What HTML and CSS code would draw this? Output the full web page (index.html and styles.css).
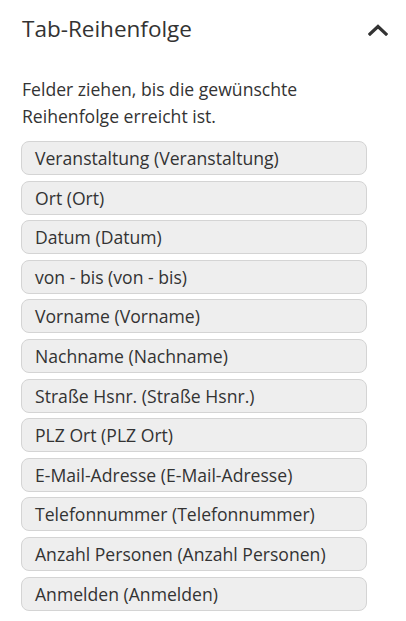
FILE: index.html
```html
<!DOCTYPE html>
<html lang="de">
<head>
<meta charset="utf-8">
<title>Tab-Reihenfolge</title>
<link rel="stylesheet" href="styles.css">
</head>
<body>
<section class="panel">
  <header class="panel-header">
    <h2 class="panel-title">Tab-Reihenfolge</h2>
    <svg class="chevron" width="20" height="12" viewBox="0 0 20 12" aria-hidden="true">
      <path d="M2 10 L10 2.5 L18 10" fill="none" stroke="#333" stroke-width="3.2" stroke-linecap="square" stroke-linejoin="miter"/>
    </svg>
  </header>
  <p class="hint">Felder ziehen, bis die gewünschte Reihenfolge erreicht ist.</p>
  <ul class="order-list">
    <li class="order-item">Veranstaltung (Veranstaltung)</li>
    <li class="order-item">Ort (Ort)</li>
    <li class="order-item">Datum (Datum)</li>
    <li class="order-item">von - bis (von - bis)</li>
    <li class="order-item">Vorname (Vorname)</li>
    <li class="order-item">Nachname (Nachname)</li>
    <li class="order-item">Straße Hsnr. (Straße Hsnr.)</li>
    <li class="order-item">PLZ Ort (PLZ Ort)</li>
    <li class="order-item">E-Mail-Adresse (E-Mail-Adresse)</li>
    <li class="order-item">Telefonnummer (Telefonnummer)</li>
    <li class="order-item">Anzahl Personen (Anzahl Personen)</li>
    <li class="order-item">Anmelden (Anmelden)</li>
  </ul>
</section>
</body>
</html>
```

FILE: styles.css
```css
html, body {
  margin: 0;
  padding: 0;
  background: #ffffff;
}

body {
  font-family: "Open Sans", "Liberation Sans", sans-serif;
  color: #333333;
}

.panel {
  padding: 14px 18px 0 22px;
}

.panel-header {
  display: flex;
  align-items: center;
  justify-content: space-between;
  height: 30px;
}

.panel-title {
  margin: 0;
  font-size: 22.5px;
  font-weight: 400;
  line-height: 30px;
  color: #333333;
}

.chevron {
  display: block;
  margin-top: 2px;
}

.hint {
  margin: 32px 0 0 0;
  font-size: 17.6px;
  line-height: 27px;
  padding-right: 40px;
}

.order-list {
  list-style: none;
  margin: 11px 21px 0 -1px;
  padding: 0;
  display: flex;
  flex-direction: column;
  gap: 5.6px;
}

.order-item {
  box-sizing: border-box;
  height: 34px;
  padding: 1px 13px 0;
  border: 1px solid #d4d4d4;
  border-radius: 8px;
  background: #eeeeee;
  font-size: 17.6px;
  line-height: 31px;
  white-space: nowrap;
}
```
